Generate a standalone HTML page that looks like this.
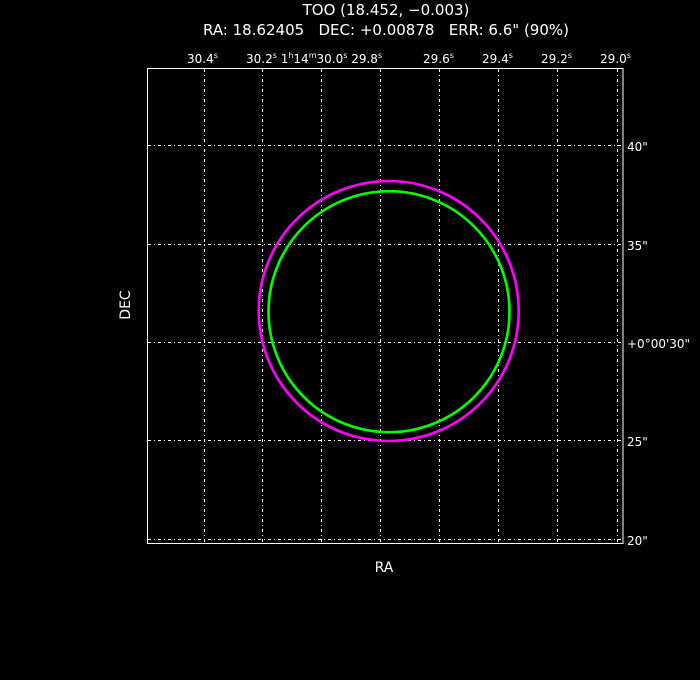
<!DOCTYPE html>
<html><head><style>
html,body{margin:0;padding:0;background:#000;}
svg{display:block;}
text{font-family:"DejaVu Sans","Liberation Sans",sans-serif;fill:#fff;}
</style></head><body>
<svg width="700" height="680" viewBox="0 0 700 680" xmlns="http://www.w3.org/2000/svg">
<rect width="700" height="680" fill="#000"/>
<text x="386" y="15" font-size="15" text-anchor="middle">TOO (18.452, −0.003)</text>
<text x="386" y="35" font-size="15" text-anchor="middle">RA: 18.62405&#160;&#160; DEC: +0.00878&#160;&#160; ERR: 6.6" (90%)</text>
<g font-size="12">
<text x="187" y="63">30.4<tspan dy="-5" font-size="8">s</tspan></text>
<text x="246" y="63">30.2<tspan dy="-5" font-size="8">s</tspan><tspan dy="5"> 1</tspan><tspan dy="-5" font-size="8">h</tspan><tspan dy="5">14</tspan><tspan dy="-5" font-size="8">m</tspan><tspan dy="5">30.0</tspan><tspan dy="-5" font-size="8">s</tspan><tspan dy="5"> 29.8</tspan><tspan dy="-5" font-size="8">s</tspan></text>
<text x="423" y="63">29.6<tspan dy="-5" font-size="8">s</tspan></text>
<text x="482" y="63">29.4<tspan dy="-5" font-size="8">s</tspan></text>
<text x="541" y="63">29.2<tspan dy="-5" font-size="8">s</tspan></text>
<text x="600" y="63">29.0<tspan dy="-5" font-size="8">s</tspan></text>
<text x="627" y="151">40"</text>
<text x="627" y="250">35"</text>
<text x="627" y="348">+0°00'30"</text>
<text x="627" y="446">25"</text>
<text x="627" y="545">20"</text>
<text x="384" y="572" font-size="14" text-anchor="middle">RA</text>
<text x="0" y="0" font-size="14" text-anchor="middle" transform="translate(130,305) rotate(-90)">DEC</text>
</g>
<g stroke="#fff" stroke-width="1" stroke-dasharray="3,3,1,3">
<line x1="204.5" y1="69" x2="204.5" y2="542"/>
<line x1="262.5" y1="69" x2="262.5" y2="542"/>
<line x1="321.5" y1="69" x2="321.5" y2="542"/>
<line x1="380.5" y1="69" x2="380.5" y2="542"/>
<line x1="439.5" y1="69" x2="439.5" y2="542"/>
<line x1="498.5" y1="69" x2="498.5" y2="542"/>
<line x1="557.5" y1="69" x2="557.5" y2="542"/>
<line x1="617.5" y1="69" x2="617.5" y2="542"/>
<line x1="148" y1="145.5" x2="622" y2="145.5"/>
<line x1="148" y1="244.5" x2="622" y2="244.5"/>
<line x1="148" y1="342.5" x2="622" y2="342.5"/>
<line x1="148" y1="440.5" x2="622" y2="440.5"/>
<line x1="148" y1="539.5" x2="622" y2="539.5"/>
</g>
<rect x="147.5" y="68.5" width="475.5" height="475" fill="none" stroke="#fff" stroke-width="1"/>
<circle cx="388.7" cy="311" r="130" fill="none" stroke="#ff00ff" stroke-width="2.6"/>
<circle cx="389" cy="311.7" r="120.5" fill="none" stroke="#00ff00" stroke-width="2.6"/>
</svg>
</body></html>
